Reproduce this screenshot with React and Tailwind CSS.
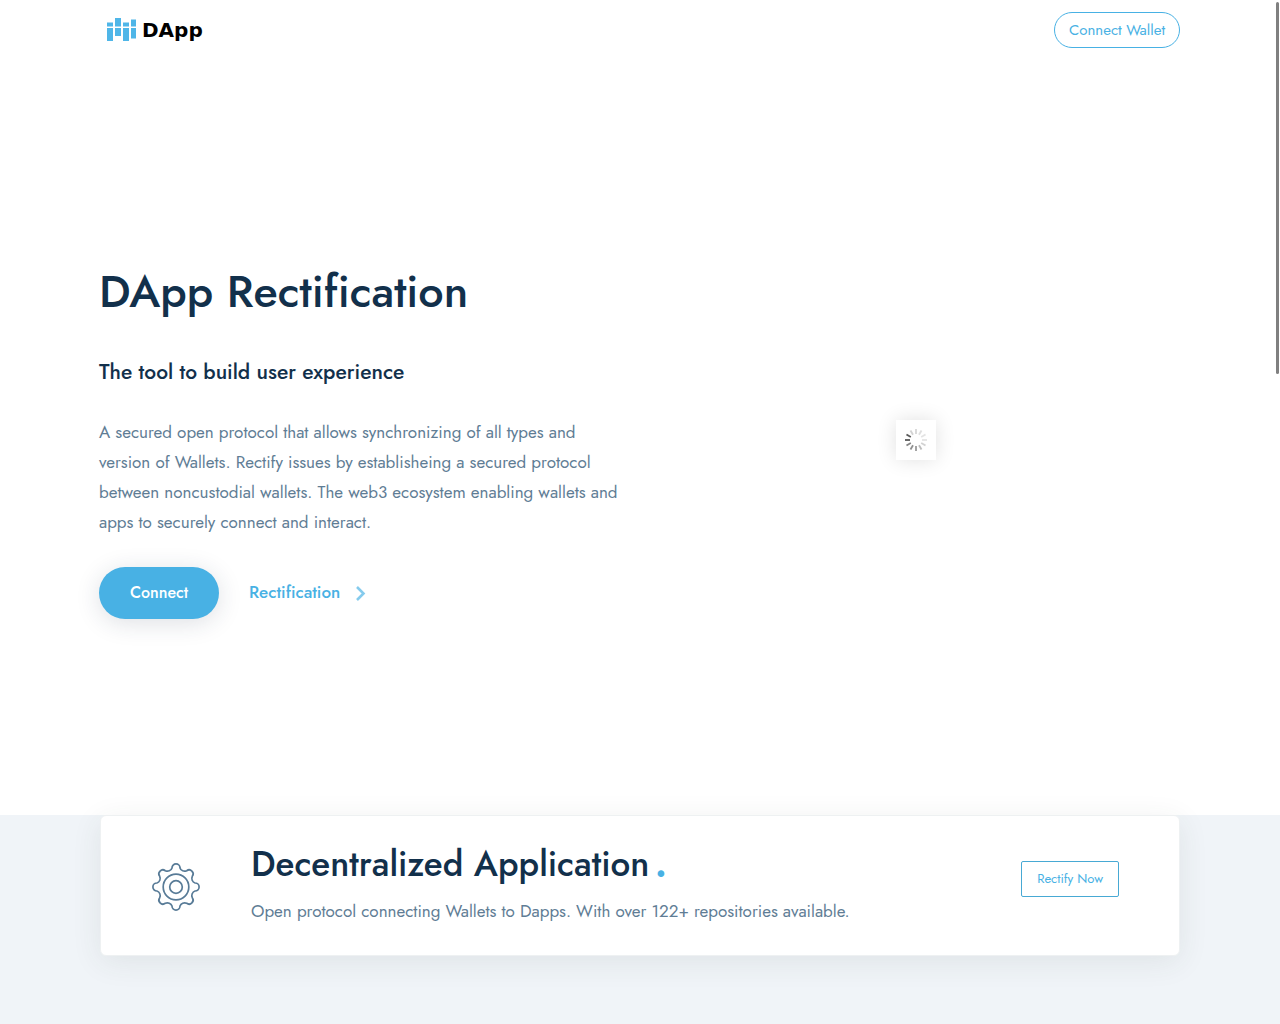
import React from 'react'

const SPOKES = [0, 30, 60, 90, 120, 150, 180, 210, 240, 270, 300, 330]
const SPOKE_OPACITY = [0.18, 0.14, 0.12, 0.12, 0.2, 0.3, 0.45, 0.5, 0.55, 0.75, 0.75, 0.2]

function Logo(){
  return (
    <a href="#" className="flex items-center gap-1 pl-1.5 text-black">
      <svg width="32" height="26" viewBox="0 0 32 26" fill="#4fb6e8" aria-hidden="true">
        <rect x="1" y="5.5" width="6" height="4" />
        <rect x="1" y="11" width="6" height="13" />
        <rect x="9" y="1" width="6" height="8.5" />
        <rect x="9" y="11" width="6" height="8" />
        <rect x="17" y="5.5" width="6" height="4" />
        <rect x="17" y="11" width="6" height="13" />
        <rect x="25" y="2.5" width="5" height="7" />
        <rect x="25" y="11" width="5" height="10.5" />
      </svg>
      <span className="font-['DejaVu_Sans',sans-serif] text-xl font-bold leading-6">DApp</span>
    </a>
  )
}

function Spinner(){
  return (
    <div className="bg-white p-2 shadow-[0_0_20px_rgba(0,0,0,0.12)]">
      <svg width="24" height="24" viewBox="0 0 24 24" stroke="#222" strokeWidth="1.8" aria-hidden="true">
        {SPOKES.map((deg, i) => (
          <line key={deg} x1="12" y1="1" x2="12" y2="6" opacity={SPOKE_OPACITY[i]} transform={`rotate(${deg} 12 12)`} />
        ))}
      </svg>
    </div>
  )
}

function GearIcon(){
  return (
    <svg width="48" height="48" viewBox="0 0 48 48" fill="none" stroke="#587b97" strokeWidth="1.7" strokeLinejoin="round" className="shrink-0" aria-hidden="true">
      <path d="M20 4.9A4 4 0 0 1 28 4.9A4.8 4.8 0 0 0 34.7 7.7A4 4 0 0 1 40.3 13.3A4.8 4.8 0 0 0 43.1 20A4 4 0 0 1 43.1 28A4.8 4.8 0 0 0 40.3 34.7A4 4 0 0 1 34.7 40.3A4.8 4.8 0 0 0 28 43.1A4 4 0 0 1 20 43.1A4.8 4.8 0 0 0 13.3 40.3A4 4 0 0 1 7.7 34.7A4.8 4.8 0 0 0 4.9 28A4 4 0 0 1 4.9 20A4.8 4.8 0 0 0 7.7 13.3A4 4 0 0 1 13.3 7.7A4.8 4.8 0 0 0 20 4.9Z" />
      <circle cx="24" cy="24" r="12.8" />
      <circle cx="24" cy="24" r="6.3" />
    </svg>
  )
}

function Hero(){
  return (
    <section className="mx-auto grid w-full max-w-[1082px] items-center gap-5 pt-50 pb-49 md:grid-cols-2">
      <div>
        <h1 className="text-[45px] font-medium leading-16 text-[#12304b]">DApp Rectification</h1>
        <h2 className="mt-8 text-[21px] font-medium leading-8 text-[#12304b]">The tool to build user experience</h2>
        <p className="mt-[29px] text-[17px] leading-[30px] text-[#5f7d95]">
          A secured open protocol that allows synchronizing of all types and version of Wallets. Rectify issues by establisheing a secured protocol between noncustodial wallets. The web3 ecosystem enabling wallets and apps to securely connect and interact.
        </p>
        <div className="mt-[30px] flex items-center gap-[30px]">
          <button className="h-13 w-30 rounded-full bg-[#48b1e4] text-base font-medium text-white shadow-[0_4px_24px_rgba(31,45,72,0.15)]">Connect</button>
          <a href="#rectify" className="flex items-center gap-4 text-[17px] font-medium text-[#48b1e4]">
            Rectification
            <svg width="10" height="16" viewBox="0 0 10 16" fill="none" stroke="#85cbed" strokeWidth="2.6" aria-hidden="true">
              <path d="M1 2L7.5 8.5L1 15" />
            </svg>
          </a>
        </div>
      </div>
      <div className="flex justify-center">
        <Spinner />
      </div>
    </section>
  )
}

function RectifyCard(){
  return (
    <div id="rectify" className="mx-auto flex max-w-[1080px] items-center rounded-md border border-[#eef1f2] bg-white pt-6 pr-15 pb-[22px] pl-[51px] shadow-[0_6px_30px_rgba(60,70,60,0.09)]">
      <GearIcon />
      <div className="ml-[51px] flex-1 pb-1.5">
        <h2 className="text-[35px] font-medium leading-12 text-[#12304b]">
          Decentralized Application<span className="ml-1.5 font-bold text-[#48b1e4]">.</span>
        </h2>
        <p className="mt-[7px] text-[17px] leading-8 text-[#5f7d95]">Open protocol connecting Wallets to Dapps. With over 122+ repositories available.</p>
      </div>
      <button className="mb-4 h-9 rounded-xs border border-[#48a9d4] px-[15px] text-[13px] text-[#48b1e4]">Rectify Now</button>
    </div>
  )
}

export default function App(){
  return (
    <div className="flex min-h-screen flex-col bg-white font-[Jost,Lato,sans-serif]">
      <header className="mx-auto flex h-15 w-full max-w-[1080px] items-center justify-between">
        <Logo />
        <button className="h-9 rounded-full border border-[#48b1e4] px-3.5 text-[15px] text-[#48b1e4]">Connect Wallet</button>
      </header>
      <Hero />
      <div className="flex-1 bg-[#f0f4f8] pb-16">
        <RectifyCard />
      </div>
      {/* overlay scrollbar thumb */}
      <div className="fixed top-0.5 right-px h-93 w-[3px] rounded-full bg-[#808080]" />
    </div>
  )
}
